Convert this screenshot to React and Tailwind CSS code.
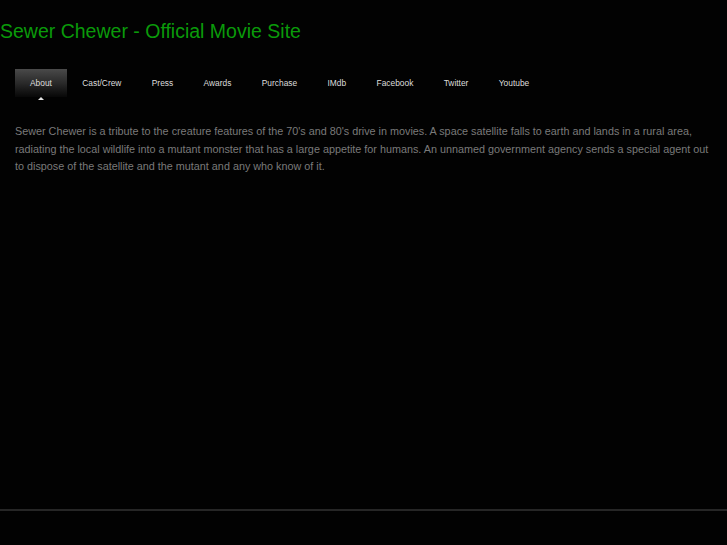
const navItems = ['About', 'Cast/Crew', 'Press', 'Awards', 'Purchase', 'IMdb', 'Facebook', 'Twitter', 'Youtube'];

export default function App() {
  return (
    <div className="min-h-[545px] w-full bg-[#020202] flex flex-col" style={{ fontFamily: '"Liberation Sans", Arial, sans-serif' }}>
      <h1 className="text-[19.5px] leading-none text-[#0a9a0a] pt-[22px] h-[69px]">Sewer Chewer - Official Movie Site</h1>

      {/* nav */}
      <ul className="flex pl-[15px] gap-[0.4px] h-[36px]">
        {navItems.map((item, i) => (
          <li key={item} className="relative">
            <a
              href="#"
              className={
                'block h-[28px] px-[15px] text-[8.4px] leading-[29px] text-[#dddddd] ' +
                (i === 0 ? 'bg-gradient-to-b from-[#4a4a4a] via-[#2a2a2a] to-[#080808]' : '')
              }
            >
              {item}
            </a>
            {i === 0 && (
              <span className="absolute left-1/2 -translate-x-1/2 top-[28px] w-0 h-0 border-l-[3px] border-r-[3px] border-b-[3px] border-l-transparent border-r-transparent border-b-[#e5e5e5]" />
            )}
          </li>
        ))}
      </ul>

      <p className="w-[713px] pl-[15px] pt-[18px] text-[10.8px] leading-[17.5px] text-[#7a7a7a]">
        Sewer Chewer is a tribute to the creature features of the 70's and 80's drive in movies. A space satellite falls to earth and lands in a rural area, radiating the local wildlife into a mutant monster that has a large appetite for humans. An unnamed government agency sends a special agent out to dispose of the satellite and the mutant and any who know of it.
      </p>

      <div className="flex-1" />
      <div className="h-[2px] bg-[#262626] mb-[34px]" />
    </div>
  );
}
